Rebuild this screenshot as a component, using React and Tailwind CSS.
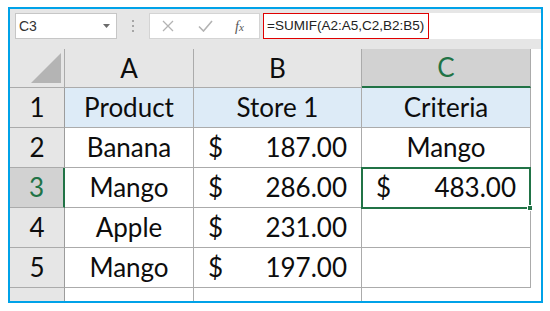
import React from 'react';

const FONT = { fontFamily: 'Lato, "Liberation Sans", sans-serif' };

const rows = [
  { n: 1, a: 'Product', b: null, bText: 'Store 1', c: 'Criteria', head: true },
  { n: 2, a: 'Banana', b: '187.00', c: 'Mango' },
  { n: 3, a: 'Mango', b: '286.00', cMoney: '483.00', active: true },
  { n: 4, a: 'Apple', b: '231.00' },
  { n: 5, a: 'Mango', b: '197.00' },
];

function Money({ value }) {
  return (
    <div className="flex h-full w-full items-center justify-between pl-[14px] pr-[14px]">
      <span>$</span>
      <span>{value}</span>
    </div>
  );
}

export default function App() {
  return (
    <div className="h-[311px] w-[550px] overflow-hidden bg-white pl-[8px] pt-[7px]">
      <div className="relative flex h-[296px] w-[535px] flex-col border-2 border-[#00a2e8] bg-white">
        {/* Formula bar */}
        <div className="flex h-[40px] items-start bg-[#e6e6e6] pl-[5px] pt-[4px]" style={{ fontFamily: '"Liberation Sans", sans-serif' }}>
          <div className="flex h-[26px] w-[102px] items-center justify-between border border-[#c6c6c6] bg-white pl-[3px] pr-[6px] text-[14px] text-[#333]">
            <span>C3</span>
            <svg width="7" height="4" viewBox="0 0 7 4"><path d="M0 0h7L3.5 4z" fill="#6b6b6b" /></svg>
          </div>
          <div className="flex h-[26px] w-[32px] flex-col items-center justify-center gap-[3px]">
            <span className="h-[2px] w-[2px] bg-[#a6a6a6]" />
            <span className="h-[2px] w-[2px] bg-[#a6a6a6]" />
            <span className="h-[2px] w-[2px] bg-[#a6a6a6]" />
          </div>
          <div className="flex h-[26px] w-[111px] items-center border border-[#d4d4d4] bg-white">
            <svg className="ml-[12px]" width="12" height="12" viewBox="0 0 12 12"><path d="M1 1l10 10M11 1L1 11" stroke="#b3b3b3" strokeWidth="1.3" /></svg>
            <svg className="ml-[24px]" width="15" height="12" viewBox="0 0 15 12"><path d="M1 6.5l4.5 4.5L14 1" stroke="#b3b3b3" strokeWidth="1.6" fill="none" /></svg>
            <span className="ml-[22px] italic text-[14px] text-[#555]" style={{ fontFamily: '"Liberation Serif", serif' }}>
              f<span className="text-[11px]">x</span>
            </span>
          </div>
          <div className="relative ml-[3px] flex h-[26px] flex-1 items-center bg-white">
            <div className="flex h-[26px] w-[166px] items-center border-[1.5px] border-[#e00000] pl-[3px] text-[13.5px] text-[#222]">
              =SUMIF(A2:A5,C2,B2:B5)
            </div>
          </div>
        </div>

        {/* Sheet grid */}
        <div className="relative flex-1" style={FONT}>
          <div className="grid grid-cols-[55px_129px_168px_169px] text-[26px] text-[#0d0d0d]">
            {/* column headers */}
            <div className="relative h-[39px] border-r border-b border-[#ababab] bg-[#e6e6e6]">
              <svg className="absolute bottom-[4px] right-[3px]" width="30" height="30" viewBox="0 0 30 30"><path d="M30 0V30H0z" fill="#b4b4b4" /></svg>
            </div>
            <div className="flex h-[39px] items-center justify-center border-r border-b border-[#ababab] bg-[#e6e6e6]">A</div>
            <div className="flex h-[39px] items-center justify-center border-r border-b border-[#ababab] bg-[#e6e6e6]">B</div>
            <div className="flex h-[39px] items-center justify-center border-r border-b-2 border-r-[#ababab] border-b-[#217346] bg-[#d2d2d2] text-[#217346]">C</div>

            {rows.map((r) => (
              <React.Fragment key={r.n}>
                <div
                  className={`flex h-[40px] items-center justify-center border-b border-b-[#ababab] ${
                    r.active ? 'border-r-2 border-r-[#217346] bg-[#d2d2d2] text-[#217346]' : 'border-r border-r-[#9c9c9c] bg-[#e6e6e6]'
                  }`}
                >
                  {r.n}
                </div>
                <div className={`flex h-[40px] items-center justify-center border-r border-b border-[#ababab] ${r.head ? 'bg-[#ddebf7]' : ''}`}>
                  {r.a}
                </div>
                <div className={`flex h-[40px] items-center justify-center border-r border-b border-[#ababab] ${r.head ? 'bg-[#ddebf7]' : ''}`}>
                  {r.head ? r.bText : <Money value={r.b} />}
                </div>
                <div className={`flex h-[40px] items-center justify-center border-r border-b border-[#ababab] ${r.head ? 'bg-[#ddebf7]' : ''}`}>
                  {r.cMoney ? <Money value={r.cMoney} /> : r.c}
                </div>
              </React.Fragment>
            ))}

            <div className="h-[13px] border-r border-r-[#9c9c9c] bg-[#e6e6e6]" />
            <div className="h-[13px] border-r border-[#ababab]" />
            <div className="h-[13px] border-r border-[#ababab]" />
            <div className="h-[13px]" />
          </div>

          {/* active cell outline */}
          <div className="absolute left-[351px] top-[118px] h-[42px] w-[170px] border-2 border-[#217346]">
            <div className="absolute -bottom-[4px] -right-[4px] h-[6px] w-[6px] border border-white bg-[#217346]" />
          </div>
        </div>
      </div>
    </div>
  );
}
